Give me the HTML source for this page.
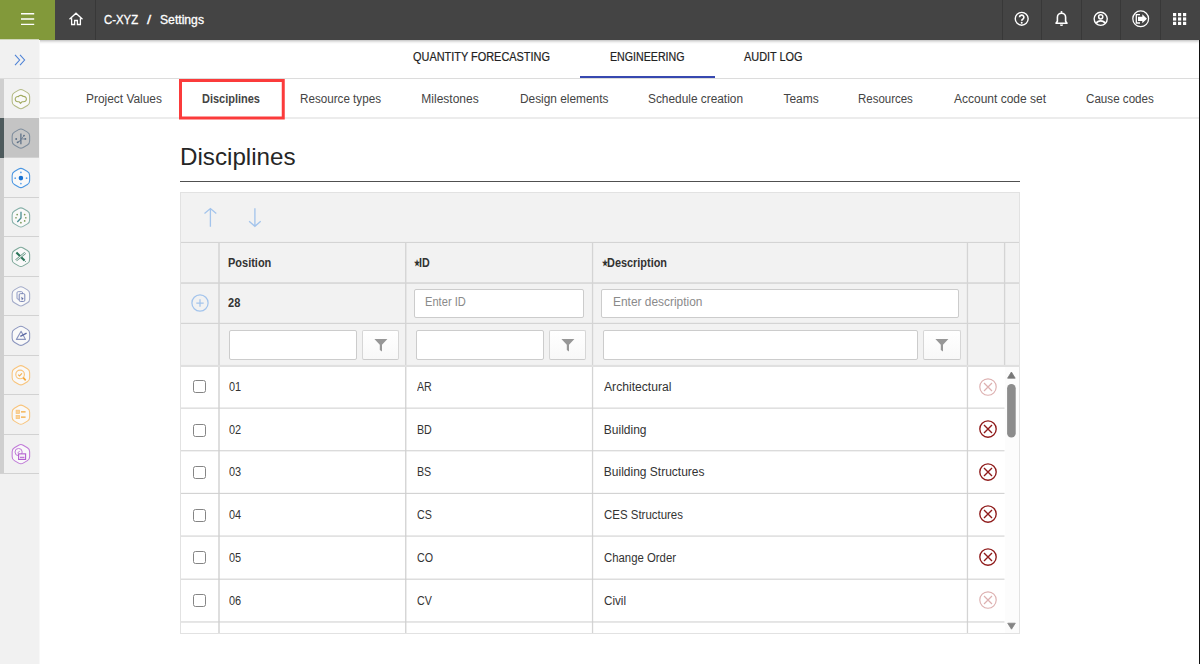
<!DOCTYPE html>
<html><head><meta charset="utf-8"><title>Settings</title>
<style>
*{box-sizing:border-box;margin:0;padding:0}
html,body{width:1200px;height:664px;overflow:hidden;background:#fff;font-family:"Liberation Sans",sans-serif;font-size:12px;color:#333}
.a{position:absolute}
.t{position:absolute;white-space:nowrap;line-height:14px;font-size:12px}
.b{font-weight:bold}
#hdr{left:0;top:0;width:1200px;height:40px;background:#444;box-shadow:0 1px 3px rgba(0,0,0,.3)}
#burger{left:0;top:0;width:55px;height:40px;background:#82993a}
.hd{top:0;width:1px;height:40px;background:#383838}
#side{left:0;top:39px;width:39px;height:625px;background:#f1f1f1;border-top:1px solid #d0d7ba}
.tab2{color:#444}
.tab1{color:#222;-webkit-text-stroke:0.2px #222}
.vl{width:1px;background:#d6d6d6}
.hl{height:1px;background:#d6d6d6}
.inp{background:#fff;border:1px solid #ccc;border-radius:2px}
.fbtn{background:linear-gradient(#fff,#f8f8f8);border:1px solid #d6d6d6;border-bottom-color:#cbcbcb;border-radius:2px}
.cell{color:#333}
.cb{width:13px;height:13px;border:1px solid #858585;border-radius:2.5px;background:#fff}
</style></head><body>
<div class="a" id="hdr"></div>
<div class="a" id="burger"></div>
<div class="a" id="side"></div>
<div class="a" style="left:39px;top:40px;width:1px;height:624px;background:#f8f8f8"></div>
<div class="a hd" style="left:95px"></div>
<div class="a hd" style="left:1002px"></div>
<div class="a hd" style="left:1041px"></div>
<div class="a hd" style="left:1081px"></div>
<div class="a hd" style="left:1120px"></div>
<div class="a hd" style="left:1160px"></div>
<div class="t" style="left:104px;top:12.9px;transform:scaleX(0.947);transform-origin:0 0;color:#fff;-webkit-text-stroke:0.3px #fff">C-XYZ</div>
<div class="t" style="left:146.8px;top:12.9px;transform:scaleX(1.250);transform-origin:0 0;color:#fff;-webkit-text-stroke:0.3px #fff">/</div>
<div class="t" style="left:159.8px;top:12.9px;transform:scaleX(1.014);transform-origin:0 0;color:#fff;-webkit-text-stroke:0.3px #fff">Settings</div>
<svg class="a" style="left:21px;top:11.7px" width="14" height="14" viewBox="0 0 14 14"><path d="M0 1.7h13.2M0 7h13.2M0 12.3h13.2" stroke="#fff" stroke-width="1.35"/></svg>
<svg class="a" style="left:68px;top:11px" width="16" height="16" viewBox="0 0 16 16"><path d="M1.5 8.2L8 2.2l6.5 6M3.6 7.2v6.3h3v-4h2.8v4h3V7.2" fill="none" stroke="#fff" stroke-width="1.3" stroke-linejoin="miter"/></svg>
<svg class="a" style="left:1013px;top:10px" width="18" height="18" viewBox="0 0 18 18"><circle cx="8.700" cy="8.800" r="6.450" fill="none" stroke="#fff" stroke-width="1.400"/><path d="M6.5 7.3a2.2 2.2 0 1 1 3.3 1.9c-.8.5-1.1.9-1.1 1.6" fill="none" stroke="#fff" stroke-width="1.7"/><circle cx="8.7" cy="12.7" r="1" fill="#fff"/></svg>
<svg class="a" style="left:1053px;top:10px" width="17" height="18" viewBox="0 0 17 18"><path d="M3 13.200h11l-1.400-1.900V7.300a4.100 4.100 0 0 0-8.200 0V11.300z" fill="none" stroke="#fff" stroke-width="1.600" stroke-linejoin="round"/><path d="M6.9 14.4h3.2a1.6 1.6 0 0 1-3.2 0z" fill="#fff"/><circle cx="8.5" cy="1.9" r="1" fill="#fff"/></svg>
<svg class="a" style="left:1092px;top:10px" width="18" height="18" viewBox="0 0 18 18"><circle cx="8.700" cy="8.800" r="6.550" fill="none" stroke="#fff" stroke-width="1.400"/><circle cx="8.7" cy="6.8" r="2.1" fill="none" stroke="#fff" stroke-width="1.5"/><path d="M4.4 13.2c.8-1.7 2.4-2.3 4.3-2.3s3.5.6 4.3 2.3" fill="none" stroke="#fff" stroke-width="1.6"/></svg>
<svg class="a" style="left:1131px;top:9px" width="20" height="20" viewBox="0 0 20 20"><circle cx="9.700" cy="9.800" r="7.900" fill="none" stroke="#fff" stroke-width="1.250"/><path d="M9 5.600H5.300v8.400H9" fill="none" stroke="#fff" stroke-width="1.300"/><path d="M7 7.700h4.300V5.300l4.700 4.500l-4.700 4.500v-2.400H7z" fill="#fff"/></svg>
<svg class="a" style="left:1173px;top:12.6px" width="14" height="14" viewBox="0 0 14 14"><rect x="0" y="0.0" width="3.2" height="3.2" fill="#fff"/><rect x="0" y="4.4" width="3.2" height="3.2" fill="#fff"/><rect x="0" y="8.8" width="3.2" height="3.2" fill="#fff"/><rect x="5" y="0.0" width="3.2" height="3.2" fill="#fff"/><rect x="5" y="4.4" width="3.2" height="3.2" fill="#fff"/><rect x="5" y="8.8" width="3.2" height="3.2" fill="#fff"/><rect x="10" y="0.0" width="3.2" height="3.2" fill="#fff"/><rect x="10" y="4.4" width="3.2" height="3.2" fill="#fff"/><rect x="10" y="8.8" width="3.2" height="3.2" fill="#fff"/></svg>
<div class="a" style="left:1199px;top:40px;width:1px;height:624px;background:#111"></div>
<svg class="a" style="left:14px;top:54px" width="12" height="12" viewBox="0 0 12 12"><path d="M1 .8l4.6 5.2L1 11.200M6 .8l4.600 5.2L6 11.200" fill="none" stroke="#4f83d6" stroke-width="1.1"/></svg>
<div class="a" style="left:0;top:79px;width:4px;height:395px;background:#cfcfcf"></div>
<div class="a" style="left:0;top:118px;width:39px;height:40px;background:#c4c4c4"></div>
<div class="a" style="left:0;top:118px;width:4px;height:40px;background:#4d5a5c"></div>
<div class="a" style="left:4px;top:157.4px;width:35px;height:1px;background:#d2d2d2"></div>
<div class="a" style="left:4px;top:196.9px;width:35px;height:1px;background:#d2d2d2"></div>
<div class="a" style="left:4px;top:236.3px;width:35px;height:1px;background:#d2d2d2"></div>
<div class="a" style="left:4px;top:275.8px;width:35px;height:1px;background:#d2d2d2"></div>
<div class="a" style="left:4px;top:315.2px;width:35px;height:1px;background:#d2d2d2"></div>
<div class="a" style="left:4px;top:354.7px;width:35px;height:1px;background:#d2d2d2"></div>
<div class="a" style="left:4px;top:394.1px;width:35px;height:1px;background:#d2d2d2"></div>
<div class="a" style="left:4px;top:433.6px;width:35px;height:1px;background:#d2d2d2"></div>
<div class="a" style="left:0px;top:473.0px;width:39px;height:1px;background:#d2d2d2"></div>
<svg class="a" style="left:0;top:0" width="40" height="480" viewBox="0 0 40 480"><path d="M18.66 90.16Q20.90 88.85 23.14 90.16L27.41 92.66Q29.65 93.97 29.65 96.57L29.65 101.62Q29.65 104.22 27.41 105.54L23.14 108.04Q20.90 109.35 18.66 108.04L14.39 105.54Q12.15 104.22 12.15 101.62L12.15 96.57Q12.15 93.97 14.39 92.66Z" fill="#f9f9f9" stroke="#b3ba84" stroke-width="1.05" stroke-linejoin="round"/><path d="M15.20 99.30c-.1-1.900 1.500-3 3.100-2.700c1-1.500 3.600-1.700 4.700-.200c1.900-.300 3.500 1 3.400 2.800c-.1 1.600-1.300 2.500-2.900 2.500h-1.300l-1.700 1.700l-1.500-1.700h-1.200c-1.500 0-2.500-1-2.600-2.400z" fill="none" stroke="#a2ab62" stroke-width="1.1" stroke-linejoin="round"/><path d="M18.66 129.61Q20.90 128.30 23.14 129.61L27.41 132.11Q29.65 133.43 29.65 136.03L29.65 141.08Q29.65 143.68 27.41 144.99L23.14 147.49Q20.90 148.80 18.66 147.49L14.39 144.99Q12.15 143.68 12.15 141.08L12.15 136.03Q12.15 133.43 14.39 132.11Z" fill="#c6c6c6" stroke="#7d8c9c" stroke-width="1.05" stroke-linejoin="round"/><path d="M20.90 133.55V144.15" stroke="#5b6f86" stroke-width="1.25" fill="none"/><path d="M20.80 139.75q-.6 1.600-3.200 2.500" stroke="#5b6f86" stroke-width="1" fill="none"/><path d="M21.40 138.95L24.00 135.65M21.40 138.95H25.30" stroke="#5b6f86" stroke-width=".7" fill="none"/><circle cx="16.20" cy="138.95" r="0.95" fill="#5b6f86"/><circle cx="17.60" cy="142.35" r="0.95" fill="#5b6f86"/><circle cx="24.00" cy="135.55" r="0.9" fill="#5b6f86"/><circle cx="25.40" cy="138.95" r="0.9" fill="#5b6f86"/><path d="M18.66 169.06Q20.90 167.75 23.14 169.06L27.41 171.56Q29.65 172.88 29.65 175.47L29.65 180.53Q29.65 183.12 27.41 184.44L23.14 186.94Q20.90 188.25 18.66 186.94L14.39 184.44Q12.15 183.12 12.15 180.53L12.15 175.47Q12.15 172.88 14.39 171.56Z" fill="#f9f9f9" stroke="#4a96e2" stroke-width="1.05" stroke-linejoin="round"/><circle cx="20.90" cy="178.10" r="2.300" fill="#1872d3"/><circle cx="15.20" cy="178.20" r=".85" fill="#5aa0ea"/><circle cx="26.60" cy="178.20" r=".85" fill="#5aa0ea"/><circle cx="20.90" cy="172.40" r=".85" fill="#5aa0ea"/><circle cx="20.90" cy="183.60" r=".85" fill="#5aa0ea"/><path d="M18.66 208.51Q20.90 207.20 23.14 208.51L27.41 211.01Q29.65 212.33 29.65 214.93L29.65 219.98Q29.65 222.58 27.41 223.89L23.14 226.39Q20.90 227.70 18.66 226.39L14.39 223.89Q12.15 222.58 12.15 219.98L12.15 214.93Q12.15 212.33 14.39 211.01Z" fill="#f9f9f9" stroke="#86b0a8" stroke-width="1.05" stroke-linejoin="round"/><path d="M21.00 211.85V218.05L17.30 222.05" stroke="#4a8e93" stroke-width="1.3" fill="none" stroke-linejoin="round"/><circle cx="25.80" cy="217.75" r=".85" fill="#7a9a5a"/><circle cx="24.65" cy="214.60" r=".85" fill="#7a9a5a"/><circle cx="24.65" cy="220.90" r=".85" fill="#7a9a5a"/><circle cx="20.90" cy="222.65" r=".85" fill="#7a9a5a"/><circle cx="16.00" cy="217.75" r=".85" fill="#7a9a5a"/><circle cx="17.15" cy="214.60" r=".85" fill="#7a9a5a"/><path d="M18.66 247.96Q20.90 246.65 23.14 247.96L27.41 250.46Q29.65 251.78 29.65 254.38L29.65 259.43Q29.65 262.03 27.41 263.34L23.14 265.84Q20.90 267.15 18.66 265.84L14.39 263.34Q12.15 262.03 12.15 259.43L12.15 254.38Q12.15 251.78 14.39 250.46Z" fill="#f9f9f9" stroke="#7fa99b" stroke-width="1.05" stroke-linejoin="round"/><path d="M16.40 252.50L24.50 260.60" stroke="#2a7458" stroke-width="2.1"/><path d="M24.50 260.60l1.300 1.200" stroke="#2a7458" stroke-width=".8"/><path d="M25.20 252.90L16.00 260.40" stroke="#6a9a88" stroke-width="2.500"/><path d="M25.20 252.90L16.00 260.40" stroke="#f6f6f6" stroke-width="1"/><path d="M18.66 287.41Q20.90 286.10 23.14 287.41L27.41 289.91Q29.65 291.23 29.65 293.83L29.65 298.88Q29.65 301.48 27.41 302.79L23.14 305.29Q20.90 306.60 18.66 305.29L14.39 302.79Q12.15 301.48 12.15 298.88L12.15 293.83Q12.15 291.23 14.39 289.91Z" fill="#f9f9f9" stroke="#a3abc9" stroke-width="1.05" stroke-linejoin="round"/><rect x="17.00" y="291.65" width="5.600" height="7.600" rx="1.200" fill="none" stroke="#8f9ac4" stroke-width="1"/><rect x="19.20" y="293.65" width="5.600" height="7.800" rx="1.200" fill="#f6f6f6" stroke="#7a86b6" stroke-width="1"/><path d="M21.20 296.65l2.400 1.900l-1.800 1.700z" fill="#5f6ca3"/><path d="M18.66 326.86Q20.90 325.55 23.14 326.86L27.41 329.36Q29.65 330.68 29.65 333.28L29.65 338.33Q29.65 340.93 27.41 342.24L23.14 344.74Q20.90 346.05 18.66 344.74L14.39 342.24Q12.15 340.93 12.15 338.33L12.15 333.28Q12.15 330.68 14.39 329.36Z" fill="#f9f9f9" stroke="#8c96be" stroke-width="1.05" stroke-linejoin="round"/><path d="M21.10 331.30L25.50 339.40H16.40z" fill="none" stroke="#8c96be" stroke-width="1.1" stroke-linejoin="round"/><path d="M26.60 333.20L20.30 336.40" stroke="#5d6aa5" stroke-width="1.400"/><path d="M18.66 366.31Q20.90 365.00 23.14 366.31L27.41 368.81Q29.65 370.13 29.65 372.73L29.65 377.78Q29.65 380.38 27.41 381.69L23.14 384.19Q20.90 385.50 18.66 384.19L14.39 381.69Q12.15 380.38 12.15 377.78L12.15 372.73Q12.15 370.13 14.39 368.81Z" fill="#f9f9f9" stroke="#f8c47c" stroke-width="1.05" stroke-linejoin="round"/><circle cx="20.10" cy="374.45" r="4.300" fill="none" stroke="#f8c47c" stroke-width="1.150"/><path d="M23.20 377.65l2.500 2.700" stroke="#f4a83a" stroke-width="1.700"/><path d="M18.20 374.65l1.300 1.300l2.500-2.500" fill="none" stroke="#f4b152" stroke-width="1.150"/><path d="M18.66 405.76Q20.90 404.45 23.14 405.76L27.41 408.26Q29.65 409.58 29.65 412.18L29.65 417.23Q29.65 419.83 27.41 421.14L23.14 423.64Q20.90 424.95 18.66 423.64L14.39 421.14Q12.15 419.83 12.15 417.23L12.15 412.18Q12.15 409.58 14.39 408.26Z" fill="#f9f9f9" stroke="#f8c47c" stroke-width="1.05" stroke-linejoin="round"/><rect x="16.10" y="410.20" width="3.400" height="3.200" fill="#f9d299" stroke="#f8c47c" stroke-width=".8"/><rect x="16.10" y="415.40" width="3.400" height="3.200" fill="#f9d299" stroke="#f8c47c" stroke-width=".8"/><path d="M21.00 411.80h4.600M21.00 417.00h4.600" stroke="#f4a83a" stroke-width="1.250"/><path d="M18.66 445.21Q20.90 443.90 23.14 445.21L27.41 447.71Q29.65 449.03 29.65 451.63L29.65 456.68Q29.65 459.28 27.41 460.59L23.14 463.09Q20.90 464.40 18.66 463.09L14.39 460.59Q12.15 459.28 12.15 456.68L12.15 451.63Q12.15 449.03 14.39 447.71Z" fill="#f9f9f9" stroke="#c07ad8" stroke-width="1.05" stroke-linejoin="round"/><circle cx="18.60" cy="452.05" r="3.600" fill="none" stroke="#c07ad8" stroke-width="1"/><path d="M17.40 453.25l2.400-2.400" stroke="#c07ad8" stroke-width="1"/><rect x="18.60" y="453.85" width="7" height="5.600" fill="#f6f6f6" stroke="#b35fd0" stroke-width="1.100"/><path d="M20.00 457.45h4.400" stroke="#c07ad8" stroke-width="1.400"/></svg>
<div class="a hl" style="left:0px;top:78px;width:1199px;background:#dcdcdc"></div>
<div class="t tab1" style="left:413px;top:50.3px;transform:scaleX(0.910);transform-origin:0 0">QUANTITY FORECASTING</div>
<div class="t tab1" style="left:610px;top:50.3px;transform:scaleX(0.887);transform-origin:0 0">ENGINEERING</div>
<div class="t tab1" style="left:744.4px;top:50.3px;transform:scaleX(0.909);transform-origin:0 0">AUDIT LOG</div>
<div class="a" style="left:580px;top:76px;width:134.5px;height:2px;background:#3748b0"></div>
<div class="a" style="left:40px;top:117px;width:1159px;height:2px;background:#ececec"></div>
<div class="t tab2" style="left:86px;top:91.6px;transform:scaleX(0.993);transform-origin:0 0">Project Values</div>
<svg class="a" style="left:170px;top:70px" width="130" height="60" viewBox="170 70 130 60"><rect x="180.5" y="80.5" width="102.75" height="37.5" fill="none" stroke="#fb3b3b" stroke-width="3"/></svg>
<div class="t tab2" style="left:202px;top:91.6px;transform:scaleX(0.915);transform-origin:0 0;font-weight:bold">Disciplines</div>
<div class="t tab2" style="left:300px;top:91.6px;transform:scaleX(0.971);transform-origin:0 0">Resource types</div>
<div class="t tab2" style="left:421.3px;top:91.6px">Milestones</div>
<div class="t tab2" style="left:519.6px;top:91.6px;transform:scaleX(0.989);transform-origin:0 0">Design elements</div>
<div class="t tab2" style="left:648px;top:91.6px;transform:scaleX(0.989);transform-origin:0 0">Schedule creation</div>
<div class="t tab2" style="left:783.4px;top:91.6px">Teams</div>
<div class="t tab2" style="left:858.3px;top:91.6px;transform:scaleX(0.956);transform-origin:0 0">Resources</div>
<div class="t tab2" style="left:954px;top:91.6px">Account code set</div>
<div class="t tab2" style="left:1086px;top:91.6px;transform:scaleX(0.969);transform-origin:0 0">Cause codes</div>
<div class="t" style="left:180px;top:143px;transform:scaleX(1.008);transform-origin:0 0;font-size:24px;line-height:28px;color:#262626">Disciplines</div>
<div class="a" style="left:180px;top:181px;width:840px;height:1px;background:#505050"></div>
<div class="a" style="left:180px;top:192px;width:840px;height:442px;background:#fff;border:1px solid #e2e2e2"></div>
<div class="a" style="left:181px;top:193px;width:838px;height:173px;background:#f2f2f2"></div>
<svg class="a" style="left:0;top:0" width="1200" height="664" viewBox="0 0 1200 664"><rect x="218.25" y="242.5" width="1.5" height="390.5" fill="#d4d4d4"/><rect x="405.05" y="242.5" width="1.4" height="390.5" fill="#d4d4d4"/><rect x="591.90" y="242.5" width="1.3" height="390.5" fill="#d4d4d4"/><rect x="966.80" y="242.5" width="1.3" height="390.5" fill="#d4d4d4"/><rect x="1003.95" y="242.5" width="1.3" height="123.5" fill="#d4d4d4"/><rect x="181" y="241.90" width="838" height="1.1" fill="#d4d4d4"/><rect x="181" y="282.30" width="838" height="1.5" fill="#d4d4d4"/><rect x="181" y="322.80" width="838" height="1.2" fill="#d4d4d4"/><rect x="181" y="364.9" width="838" height="2.1" fill="#e0e0e0"/><rect x="181" y="407.60" width="823.5" height="1.05" fill="#cfcfcf"/><rect x="181" y="450.25" width="823.5" height="1.05" fill="#cfcfcf"/><rect x="181" y="492.85" width="823.5" height="1.05" fill="#cfcfcf"/><rect x="181" y="535.55" width="823.5" height="1.05" fill="#cfcfcf"/><rect x="181" y="578.65" width="823.5" height="1.05" fill="#cfcfcf"/><rect x="181" y="621.45" width="823.5" height="1.05" fill="#cfcfcf"/></svg>
<div class="t b" style="left:227.6px;top:255.9px;transform:scaleX(0.915);transform-origin:0 0">Position</div>
<div class="t b" style="left:414px;top:255.9px;transform:scaleX(0.750);transform-origin:0 0"><span style="font-size:9px;position:relative;top:-0.5px">&#9733;</span></div>
<div class="t b" style="left:419.2px;top:255.9px;transform:scaleX(0.890);transform-origin:0 0">ID</div>
<div class="t b" style="left:601.8px;top:255.9px;transform:scaleX(0.750);transform-origin:0 0"><span style="font-size:9px;position:relative;top:-0.5px">&#9733;</span></div>
<div class="t b" style="left:607.2px;top:255.9px;transform:scaleX(0.909);transform-origin:0 0">Description</div>
<div class="t b" style="left:227.6px;top:296.2px;transform:scaleX(0.920);transform-origin:0 0">28</div>
<div class="a inp" style="left:414px;top:289px;width:170px;height:29px"></div>
<div class="t" style="left:425.3px;top:295.3px;transform:scaleX(0.927);transform-origin:0 0;color:#8a8a8a">Enter ID</div>
<div class="a inp" style="left:601px;top:289px;width:358px;height:29px"></div>
<div class="t" style="left:612.5px;top:295.3px;transform:scaleX(0.993);transform-origin:0 0;color:#8a8a8a">Enter description</div>
<div class="a inp" style="left:229px;top:330px;width:128px;height:30px"></div>
<div class="a fbtn" style="left:362px;top:330px;width:37px;height:30px"></div>
<svg class="a" style="left:373.5px;top:338px" width="14" height="14" viewBox="0 0 14 14"><path d="M0.400 1h13l-5.400 5.700v6.800l-2.200-1.500v-5.300z" fill="#979797"/></svg>
<div class="a inp" style="left:416px;top:330px;width:128px;height:30px"></div>
<div class="a fbtn" style="left:549px;top:330px;width:37px;height:30px"></div>
<svg class="a" style="left:560.5px;top:338px" width="14" height="14" viewBox="0 0 14 14"><path d="M0.400 1h13l-5.400 5.700v6.800l-2.200-1.500v-5.300z" fill="#979797"/></svg>
<div class="a inp" style="left:603px;top:330px;width:315px;height:30px"></div>
<div class="a fbtn" style="left:923px;top:330px;width:38px;height:30px"></div>
<svg class="a" style="left:935.0px;top:338px" width="14" height="14" viewBox="0 0 14 14"><path d="M0.400 1h13l-5.400 5.700v6.800l-2.200-1.500v-5.300z" fill="#979797"/></svg>
<div class="a cb" style="left:192.800px;top:380.2px"></div>
<div class="t cell" style="left:229.2px;top:379.9px;transform:scaleX(0.910);transform-origin:0 0">01</div>
<div class="t cell" style="left:416.5px;top:379.9px;transform:scaleX(0.890);transform-origin:0 0">AR</div>
<div class="t cell" style="left:603.8px;top:379.9px;transform:scaleX(1.012);transform-origin:0 0">Architectural</div>
<svg class="a" style="left:977.900px;top:376.5px" width="20" height="20" viewBox="0 0 20 20"><circle cx="10" cy="10" r="8.200" fill="none" stroke="#ddb0b0" stroke-width="1.15"/><path d="M6 6l8 8M14 6l-8 8" stroke="#ddb0b0" stroke-width="1.15" fill="none"/></svg>
<div class="a cb" style="left:192.800px;top:423.9px"></div>
<div class="t cell" style="left:229.2px;top:422.9px;transform:scaleX(0.910);transform-origin:0 0">02</div>
<div class="t cell" style="left:416.5px;top:422.9px;transform:scaleX(0.890);transform-origin:0 0">BD</div>
<div class="t cell" style="left:603.8px;top:422.9px">Building</div>
<svg class="a" style="left:977.900px;top:419.2px" width="20" height="20" viewBox="0 0 20 20"><circle cx="10" cy="10" r="8.200" fill="none" stroke="#8f1b1b" stroke-width="1.35"/><path d="M6 6l8 8M14 6l-8 8" stroke="#8f1b1b" stroke-width="1.35" fill="none"/></svg>
<div class="a cb" style="left:192.800px;top:466.1px"></div>
<div class="t cell" style="left:229.2px;top:465.2px;transform:scaleX(0.910);transform-origin:0 0">03</div>
<div class="t cell" style="left:416.5px;top:465.2px;transform:scaleX(0.890);transform-origin:0 0">BS</div>
<div class="t cell" style="left:603.8px;top:465.2px">Building Structures</div>
<svg class="a" style="left:977.900px;top:461.9px" width="20" height="20" viewBox="0 0 20 20"><circle cx="10" cy="10" r="8.200" fill="none" stroke="#8f1b1b" stroke-width="1.35"/><path d="M6 6l8 8M14 6l-8 8" stroke="#8f1b1b" stroke-width="1.35" fill="none"/></svg>
<div class="a cb" style="left:192.800px;top:508.7px"></div>
<div class="t cell" style="left:229.2px;top:507.8px;transform:scaleX(0.910);transform-origin:0 0">04</div>
<div class="t cell" style="left:416.5px;top:507.8px;transform:scaleX(0.890);transform-origin:0 0">CS</div>
<div class="t cell" style="left:603.8px;top:507.8px;transform:scaleX(0.955);transform-origin:0 0">CES Structures</div>
<svg class="a" style="left:977.900px;top:504.4px" width="20" height="20" viewBox="0 0 20 20"><circle cx="10" cy="10" r="8.200" fill="none" stroke="#8f1b1b" stroke-width="1.35"/><path d="M6 6l8 8M14 6l-8 8" stroke="#8f1b1b" stroke-width="1.35" fill="none"/></svg>
<div class="a cb" style="left:192.800px;top:551.3px"></div>
<div class="t cell" style="left:229.2px;top:550.6px;transform:scaleX(0.910);transform-origin:0 0">05</div>
<div class="t cell" style="left:416.5px;top:550.6px;transform:scaleX(0.890);transform-origin:0 0">CO</div>
<div class="t cell" style="left:603.8px;top:550.6px;transform:scaleX(0.947);transform-origin:0 0">Change Order</div>
<svg class="a" style="left:977.900px;top:547.2px" width="20" height="20" viewBox="0 0 20 20"><circle cx="10" cy="10" r="8.200" fill="none" stroke="#8f1b1b" stroke-width="1.35"/><path d="M6 6l8 8M14 6l-8 8" stroke="#8f1b1b" stroke-width="1.35" fill="none"/></svg>
<div class="a cb" style="left:192.800px;top:594.0px"></div>
<div class="t cell" style="left:229.2px;top:594.0px;transform:scaleX(0.910);transform-origin:0 0">06</div>
<div class="t cell" style="left:416.5px;top:594.0px;transform:scaleX(0.890);transform-origin:0 0">CV</div>
<div class="t cell" style="left:603.8px;top:594.0px;transform:scaleX(0.970);transform-origin:0 0">Civil</div>
<svg class="a" style="left:977.900px;top:590.2px" width="20" height="20" viewBox="0 0 20 20"><circle cx="10" cy="10" r="8.200" fill="none" stroke="#ddb0b0" stroke-width="1.15"/><path d="M6 6l8 8M14 6l-8 8" stroke="#ddb0b0" stroke-width="1.15" fill="none"/></svg>
<div class="a" style="left:1005px;top:367px;width:14px;height:266px;background:#fcfcfc"></div>
<svg class="a" style="left:1000px;top:360px" width="24" height="280" viewBox="1000 360 24 280"><path d="M1007.600 378.200l3.800-6.200l3.800 6.200z" fill="#777" stroke="#777" stroke-width=".8" stroke-linejoin="round"/><rect x="1007.100" y="384" width="8.600" height="53.500" rx="4.300" fill="#8c8c8c"/><path d="M1007.700 623.200l3.800 6l3.800-6z" fill="#858585" stroke="#858585" stroke-width=".8" stroke-linejoin="round"/></svg>
<svg class="a" style="left:203px;top:207px" width="14" height="22" viewBox="0 0 14 22"><path d="M7.400 19.700V1.800M1.500 6.400l5.900-4.800l5.900 4.800" fill="none" stroke="#a3c4ec" stroke-width="1.300"/></svg>
<svg class="a" style="left:248px;top:207px" width="14" height="22" viewBox="0 0 14 22"><path d="M6.900 1.200V19.200M1.100 14.300l5.800 5l5.800-5" fill="none" stroke="#a3c4ec" stroke-width="1.300"/></svg>
<svg class="a" style="left:190.150px;top:293.200px" width="20" height="20" viewBox="0 0 20 20"><circle cx="10" cy="10" r="8.100" fill="none" stroke="#a3c4ec" stroke-width="1.250"/><path d="M10 6.300v7.400M6.300 10h7.400" stroke="#a3c4ec" stroke-width="1.250"/></svg>
</body></html>
